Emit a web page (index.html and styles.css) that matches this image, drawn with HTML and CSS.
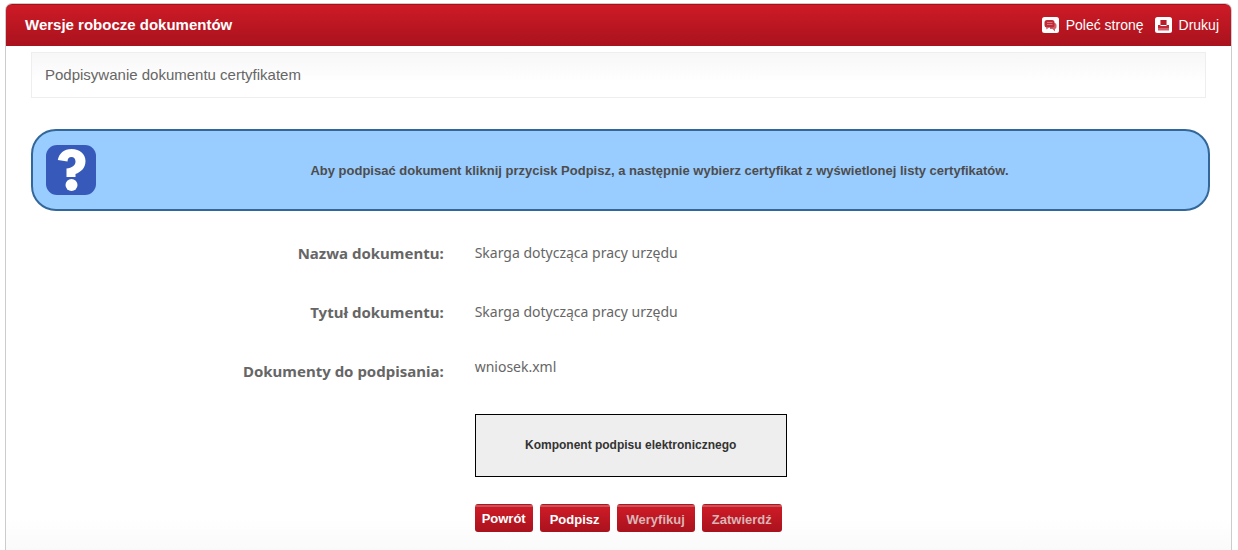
FILE: index.html
```html
<!DOCTYPE html>
<html lang="pl">
<head>
<meta charset="utf-8">
<title>Wersje robocze dokumentów</title>
<meta name="viewport" content="width=device-width, initial-scale=1">
<link rel="stylesheet" href="styles.css">
</head>
<body>
<main class="panel">
  <header class="panel-header">
    <h1 class="panel-title">Wersje robocze dokumentów</h1>
    <nav class="tools">
      <a class="tool" href="#polec">
        <svg class="tool-icon" viewBox="0 0 17 16" aria-hidden="true">
          <rect width="17" height="16" rx="2.500" fill="#fff"/>
          <path d="M8 6h4.500a2 2 0 0 1 2 2v2a2 2 0 0 1-1.500 2v2.500L10.500 12H8z" fill="#d4606a"/>
          <rect x="2.500" y="3" width="10" height="7.500" rx="2.500" fill="#c02a36"/>
          <path d="M4 10h3.500L4.500 12.500z" fill="#d4606a"/>
          <path d="M5 5.500h5.500M5 7.500h5.500" stroke="#d4707a"/>
        </svg>
        Poleć stronę
      </a>
      <a class="tool" href="#drukuj">
        <svg class="tool-icon" viewBox="0 0 17 16" aria-hidden="true">
          <rect width="17" height="16" rx="2.500" fill="#fff"/>
          <path d="M6 3h5v5H6z" fill="#b81e2a"/>
          <path d="M5 3h1v5H5zM11 3h1v5h-1z" fill="#dc8088"/>
          <path d="M3 8h2.500v1h6V8H14v3H3z" fill="#c02a36"/>
          <path d="M3 11h11v2.500H3z" fill="#d4606a"/>
        </svg>
        Drukuj
      </a>
    </nav>
  </header>

  <div class="panel-body">
    <h2 class="subtitle">Podpisywanie dokumentu certyfikatem</h2>

    <section class="notice">
      <svg class="notice-icon" viewBox="0 0 50 50" aria-hidden="true">
        <rect width="50" height="50" rx="11" fill="#3759ba"/>
        <path d="M11.800 15C13 8.500 18 4 25.500 4 34 4 39.500 9 39.500 16c0 7-4.500 11-10 13v3h-9v-8.500c5.500-.5 9-3 9-7 0-2.500-1.500-4.500-4-4.500-2.800 0-4 1.800-4 4.500z" fill="#fff"/>
        <circle cx="25.500" cy="40" r="6" fill="#fff"/>
      </svg>
      <p class="notice-text">Aby podpisać dokument kliknij przycisk Podpisz, a następnie wybierz certyfikat z wyświetlonej listy certyfikatów.</p>
    </section>

    <dl class="details">
      <dt class="label">Nazwa dokumentu:</dt>
      <dd class="value">Skarga dotycząca pracy urzędu</dd>
      <dt class="label">Tytuł dokumentu:</dt>
      <dd class="value">Skarga dotycząca pracy urzędu</dd>
      <dt class="label">Dokumenty do podpisania:</dt>
      <dd class="value value-file">wniosek.xml</dd>
    </dl>

    <div class="signing">
      <div class="component">Komponent podpisu elektronicznego</div>
      <div class="actions">
        <button class="btn btn-back" type="button">Powrót</button>
        <button class="btn" type="button">Podpisz</button>
        <button class="btn" type="button" disabled>Weryfikuj</button>
        <button class="btn" type="button" disabled>Zatwierdź</button>
      </div>
    </div>
  </div>
</main>
</body>
</html>
```

FILE: styles.css
```css
* {
  box-sizing: border-box;
}

body {
  margin: 0;
  padding: 3px 6px 0 5px;
  background: #fff;
  color: #666;
  font-family: "Liberation Sans", Arial, sans-serif;
  font-size: 14px;
}

.panel {
  border: 1px solid #ccc;
  border-bottom: 0;
  border-radius: 7px 7px 0 0;
  background: linear-gradient(to top, #fafafa, #fff 32px);
}

.panel-header {
  display: flex;
  align-items: center;
  justify-content: space-between;
  min-height: 42px;
  padding: 0 12px 2px 19px;
  border-top: 1px solid #a8101c;
  border-radius: 6px 6px 0 0;
  background: linear-gradient(#cd1b27, #a9121d);
  color: #fff;
}

.panel-title {
  margin: 0;
  font-size: 15px;
  font-weight: bold;
}

.tools {
  display: flex;
  gap: 11px;
}

.tool {
  display: flex;
  align-items: center;
  gap: 7px;
  color: #fff;
  text-decoration: none;
}

.tool-icon {
  width: 17px;
  height: 16px;
}

.panel-body {
  padding: 6px 21px 18px 25px;
}

.subtitle {
  margin: 0 4px 31px 0;
  padding: 0 13px;
  border: 1px solid #eee;
  background: linear-gradient(#f7f7f7, #fff 30px);
  font-size: 15px;
  font-weight: normal;
  line-height: 44px;
}

.notice {
  display: flex;
  align-items: center;
  gap: 28px;
  min-height: 82px;
  padding: 0 13px;
  border: 2px solid #369;
  border-radius: 25px;
  background: #9cf;
}

.notice-icon {
  flex: none;
  width: 50px;
  height: 50px;
}

.notice-text {
  flex: 1;
  margin: 0;
  color: #4d4d4d;
  font-size: 13px;
  font-weight: bold;
  text-align: center;
}

.details {
  display: grid;
  grid-template-columns: 35% 1fr;
  column-gap: 31px;
  row-gap: 39px;
  margin: 32px 0 33px;
  font-family: Tahoma, "Noto Sans", sans-serif;
  line-height: 20px;
}

.label {
  font-size: 15px;
  font-weight: bold;
  text-align: right;
}

.value {
  margin: 0;
}

.value-file {
  margin-top: -4px;
}

.signing {
  margin-left: calc(35% + 31px);
}

.component {
  max-width: 312px;
  border: 1px solid #000;
  background: #eee;
  color: #333;
  font-size: 12px;
  font-weight: bold;
  line-height: 61px;
  text-align: center;
}

.actions {
  display: flex;
  flex-wrap: wrap;
  gap: 7px;
  margin-top: 27px;
}

.btn {
  height: 28px;
  padding: 2px 10px 0;
  border: 0;
  border-radius: 3px;
  background: linear-gradient(#b01520 1px, #c8545a 1px, #c8545a 3px, #cd1b27 3px, #a9121d);
  color: #fff;
  font-family: inherit;
  font-size: 13px;
  font-weight: bold;
  cursor: pointer;
}

.btn-back {
  padding: 0 7px;
}

.btn:disabled {
  color: #d9b5b5;
  cursor: default;
}
```
